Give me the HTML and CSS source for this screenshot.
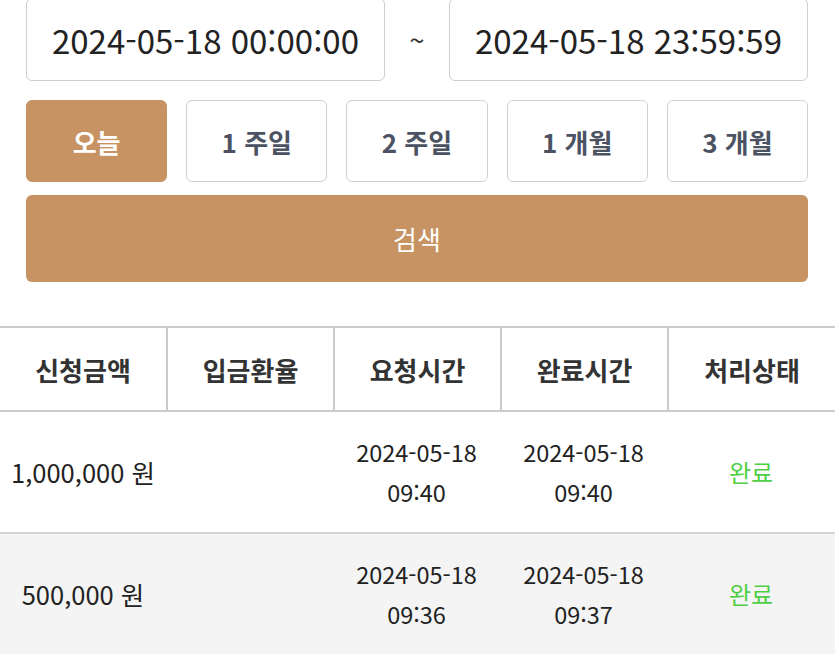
FILE: index.html
```html
<!DOCTYPE html>
<html lang="ko">
<head>
<meta charset="utf-8">
<link rel="stylesheet" href="styles.css">
</head>
<body>
<div class="filters">
  <div class="date-row">
    <div class="date-input">2024-05-18 00:00:00</div>
    <div class="tilde">~</div>
    <div class="date-input">2024-05-18 23:59:59</div>
  </div>
  <div class="range-row">
    <button class="range active">오늘</button>
    <button class="range">1 주일</button>
    <button class="range">2 주일</button>
    <button class="range">1 개월</button>
    <button class="range">3 개월</button>
  </div>
  <button class="search">검색</button>
</div>
<div class="table">
  <div class="thead">
    <div class="th">신청금액</div>
    <div class="th">입금환율</div>
    <div class="th">요청시간</div>
    <div class="th">완료시간</div>
    <div class="th">처리상태</div>
  </div>
  <div class="tr">
    <div class="td amount">1,000,000 원</div>
    <div class="td"></div>
    <div class="td">2024-05-18<br>09:40</div>
    <div class="td">2024-05-18<br>09:40</div>
    <div class="td done">완료</div>
  </div>
  <div class="tr alt">
    <div class="td amount">500,000 원</div>
    <div class="td"></div>
    <div class="td">2024-05-18<br>09:36</div>
    <div class="td">2024-05-18<br>09:37</div>
    <div class="td done">완료</div>
  </div>
</div>
</body>
</html>
```

FILE: styles.css
```css
* { box-sizing: border-box; }
html, body {
  margin: 0;
  padding: 0;
  background: #fff;
  font-family: "Noto Sans CJK KR", "Noto Sans", sans-serif;
  color: #222;
  overflow: hidden;
}
.filters {
  padding: 0 27px 0 26px;
  margin-top: -2px;
}
.date-row {
  display: flex;
  align-items: center;
  height: 83px;
}
.date-input {
  flex: 1;
  height: 83px;
  border: 1px solid #cfcfcf;
  border-radius: 6px;
  display: flex;
  align-items: center;
  justify-content: center;
  font-size: 33px;
  color: #222;
}
.tilde {
  width: 64px;
  text-align: center;
  font-size: 27px;
  color: #333;
}
.range-row {
  display: grid;
  grid-template-columns: repeat(5, 1fr);
  gap: 19px;
  margin-top: 19px;
}
.range {
  height: 82px;
  border: 1px solid #cfcfcf;
  border-radius: 6px;
  background: #fff;
  font-family: inherit;
  font-size: 26px;
  font-weight: 700;
  color: #4b5262;
  padding: 0;
}
.range.active {
  background: #c79363;
  border-color: #c79363;
  color: #fff;
}
.search {
  display: block;
  width: 100%;
  height: 87px;
  margin-top: 13px;
  border: none;
  border-radius: 6px;
  background: #c79363;
  color: #fff;
  font-family: inherit;
  font-size: 26px;
  font-weight: 400;
}
.table {
  margin-top: 44px;
}
.thead, .tr {
  display: grid;
  grid-template-columns: 166px 167px 167px 167px 1fr;
}
.thead {
  border-top: 2px solid #cccccc;
  border-bottom: 2px solid #cccccc;
  height: 86px;
}
.th {
  display: flex;
  align-items: center;
  justify-content: center;
  font-size: 26px;
  font-weight: 700;
  color: #333;
  border-left: 2px solid #cccccc;
}
.th:first-child { border-left: none; }
.tr {
  height: 122px;
  border-bottom: 2px solid #d6d6d6;
}
.tr.alt { background: #f4f4f4; }
.td {
  display: flex;
  align-items: center;
  justify-content: center;
  text-align: center;
  font-size: 23.5px;
  line-height: 40px;
  color: #222;
}
.td.amount { font-size: 25.5px; }
.td.done { color: #4fcf45; font-size: 24px; }
```
